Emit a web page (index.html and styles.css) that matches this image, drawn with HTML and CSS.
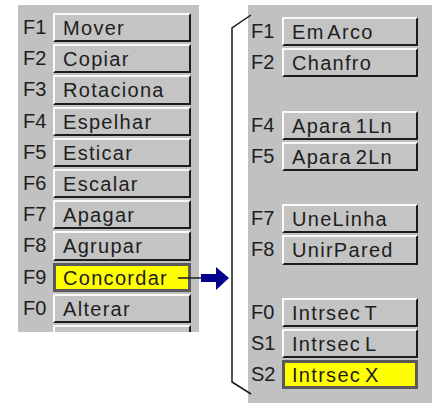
FILE: index.html
```html
<!DOCTYPE html>
<html>
<head>
<link rel="stylesheet" href="styles.css">
</head>
<body>

<div class="stage">

  <!-- main command menu -->
  <div class="panel panel_left">
    <div class="row"><span class="key">F1</span><span class="btn">Mover</span></div>
    <div class="row"><span class="key">F2</span><span class="btn">Copiar</span></div>
    <div class="row"><span class="key">F3</span><span class="btn">Rotaciona</span></div>
    <div class="row"><span class="key">F4</span><span class="btn">Espelhar</span></div>
    <div class="row"><span class="key">F5</span><span class="btn">Esticar</span></div>
    <div class="row"><span class="key">F6</span><span class="btn">Escalar</span></div>
    <div class="row"><span class="key">F7</span><span class="btn">Apagar</span></div>
    <div class="row"><span class="key">F8</span><span class="btn">Agrupar</span></div>
    <div class="row"><span class="key">F9</span><span class="btn btn_on">Concordar</span></div>
    <div class="row"><span class="key">F0</span><span class="btn">Alterar</span></div>
    <div class="row"><span class="key">S1</span><span class="btn">Identificar</span></div>
  </div>

  <!-- sub menu of Concordar -->
  <div class="panel panel_right">
    <div class="row"><span class="key">F1</span><span class="btn">Em Arco</span></div>
    <div class="row"><span class="key">F2</span><span class="btn">Chanfro</span></div>
    <div class="row"></div>
    <div class="row"><span class="key">F4</span><span class="btn">Apara 1Ln</span></div>
    <div class="row"><span class="key">F5</span><span class="btn">Apara 2Ln</span></div>
    <div class="row"></div>
    <div class="row"><span class="key">F7</span><span class="btn">UneLinha</span></div>
    <div class="row"><span class="key">F8</span><span class="btn">UnirPared</span></div>
    <div class="row"></div>
    <div class="row"><span class="key">F0</span><span class="btn">Intrsec T</span></div>
    <div class="row"><span class="key">S1</span><span class="btn">Intrsec L</span></div>
    <div class="row"><span class="key">S2</span><span class="btn btn_on">Intrsec X</span></div>
  </div>

  <!-- arrow and bracket that link the two menus -->
  <svg class="links" width="432" height="403" viewBox="0 0 432 403">
    <line x1="178" y1="278" x2="204" y2="278" stroke="#1a1a1a" stroke-width="1.5"/>
    <polygon points="201,274 216,274 216,267 229,278 216,290 216,282 201,282" fill="#00008c"/>
    <polyline points="251,15 232,28 232,382 251,394" fill="none" stroke="#1a1a1a" stroke-width="1.5"/>
  </svg>

</div>

</body>
</html>
```

FILE: styles.css
```css
body {
  margin: 0;
  background-color: #fff;
  font-family: "Liberation Sans", Arial, sans-serif;
  color: #1e1e1e;
}

.stage {
  position: relative;
  display: flex;
  align-items: flex-start;
  height: 398px;
  padding-top: 5px;
  overflow: hidden;
}

.panel {
  display: flex;
  flex-direction: column;
  gap: 2px;
  background-color: #c1c1c1;
  overflow: hidden;
  box-sizing: border-box;
}

.panel_left {
  margin-left: 18px;
  width: 181px;
  height: 327px;
  padding: 8px 8px 0 5px;
}

.panel_right {
  margin-left: 49px;
  flex: 1;
  height: 398px;
  padding: 12px 0 0 3px;
}

.row {
  display: flex;
  align-items: center;
  height: 29.2px;
  flex-shrink: 0;
}

.key {
  width: 30px;
  font-size: 20px;
}

.panel_right .key {
  width: 31px;
}

.btn {
  box-sizing: border-box;
  display: flex;
  align-items: center;
  width: 138px;
  height: 100%;
  padding: 2px 0 0 8px;
  border: 2px solid;
  border-color: #fafafa #1c1c1c #1c1c1c #fafafa;
  background-color: #c4c4c4;
  font-size: 20px;
  letter-spacing: 1.3px;
  word-spacing: -3px;
  white-space: nowrap;
  overflow: hidden;
}

.panel_right .btn {
  width: 136px;
}

.btn_on {
  border: 3px solid #5a5a5a;
  background-color: #ffff00;
  padding-left: 7px;
}

.links {
  position: absolute;
  top: 0;
  left: 0;
  pointer-events: none;
}
```
